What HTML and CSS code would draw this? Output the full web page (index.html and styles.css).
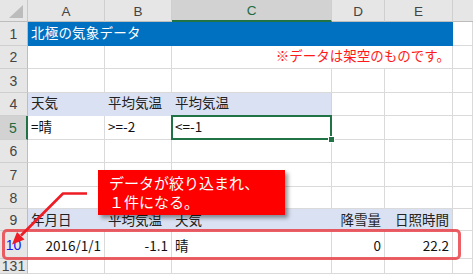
FILE: index.html
```html
<!DOCTYPE html>
<html lang="ja">
<head>
<meta charset="utf-8">
<title>北極の気象データ</title>
<link rel="stylesheet" href="styles.css">
</head>
<body>
<div class="sheet">
  <div class="corner"><svg class="tri" width="28" height="22" viewBox="0 0 28 22"><polygon points="9,18 23,18 23,5" fill="#bcbcbc"/></svg></div>
  <div class="ch">A</div>
  <div class="ch">B</div>
  <div class="ch sel">C</div>
  <div class="ch">D</div>
  <div class="ch">E</div>
  <div class="ch last"></div>

  <div class="rh">1</div>
  <div class="c title">北極の気象データ</div>
  <div class="c"></div>

  <div class="rh">2</div>
  <div class="c"></div>
  <div class="c"></div>
  <div class="c note">※データは架空のものです。</div>
  <div class="c"></div>

  <div class="rh">3</div>
  <div class="c"></div><div class="c"></div><div class="c"></div><div class="c"></div><div class="c"></div><div class="c"></div>

  <div class="rh">4</div>
  <div class="c band">天気</div>
  <div class="c band">平均気温</div>
  <div class="c band band-end">平均気温</div>
  <div class="c"></div><div class="c"></div><div class="c"></div>

  <div class="rh sel">5</div>
  <div class="c">=晴</div>
  <div class="c">&gt;=-2</div>
  <div class="c active">&lt;=-1</div>
  <div class="c"></div><div class="c"></div><div class="c"></div>

  <div class="rh">6</div>
  <div class="c"></div><div class="c"></div><div class="c"></div><div class="c"></div><div class="c"></div><div class="c"></div>

  <div class="rh">7</div>
  <div class="c"></div><div class="c"></div><div class="c"></div><div class="c"></div><div class="c"></div><div class="c"></div>

  <div class="rh">8</div>
  <div class="c"></div><div class="c"></div><div class="c"></div><div class="c"></div><div class="c"></div><div class="c"></div>

  <div class="rh">9</div>
  <div class="c band low">年月日</div>
  <div class="c band low">平均気温</div>
  <div class="c band low">天気</div>
  <div class="c band low num">降雪量</div>
  <div class="c band low num band-end">日照時間</div>
  <div class="c"></div>

  <div class="rh filtered">10</div>
  <div class="c num">2016/1/1</div>
  <div class="c num">-1.1</div>
  <div class="c">晴</div>
  <div class="c num">0</div>
  <div class="c num">22.2</div>
  <div class="c"></div>

  <div class="rh">131</div>
  <div class="c"></div><div class="c"></div><div class="c"></div><div class="c"></div><div class="c"></div><div class="c"></div>

  <div class="row-mark"></div>
  <svg class="arrow" width="473" height="274" viewBox="0 0 473 274">
    <polyline points="87,193.5 63,193.5 21,235.5" fill="none" stroke="#ee1c24" stroke-width="2.6" stroke-linejoin="round"/>
    <polygon points="12,244.5 24.5,239.5 17,232" fill="#ee1c24"/>
  </svg>
  <div class="callout">データが絞り込まれ、<br>１件になる。</div>
</div>
</body>
</html>
```

FILE: styles.css
```css
html, body {
  margin: 0;
  padding: 0;
  background: #ffffff;
}

body {
  width: 473px;
  height: 274px;
  overflow: hidden;
}

.sheet {
  position: relative;
  display: grid;
  grid-template-columns: 28px 77px 67px 160px 53px 68px 20px;
  grid-template-rows: 22px 24px 23px 24px 23px 24px 23px 24px 22px 22px 28px 15px;
  font-family: "Noto Sans CJK JP", sans-serif;
  font-size: 13.5px;
  color: #111111;
}

.corner {
  background: #e6e6e6;
  border-right: 1px solid #c8c8c8;
  border-bottom: 1px solid #bdbdbd;
  box-sizing: border-box;
  position: relative;
}

.tri {
  display: block;
}

.ch {
  background: #e6e6e6;
  border-right: 1px solid #cfcfcf;
  border-bottom: 1px solid #bdbdbd;
  box-sizing: border-box;
  display: flex;
  align-items: center;
  justify-content: center;
  font-family: "Liberation Sans", "Noto Sans", sans-serif;
  font-size: 13.5px;
  color: #444444;
  padding-top: 1px;
}

.ch.sel {
  background: #d2d2d2;
  border-bottom: 2px solid #217346;
  color: #1f6a42;
}

.ch.last {
  border-right: none;
}

.rh {
  background: #e6e6e6;
  border-right: 1px solid #bdbdbd;
  border-bottom: 1px solid #cfcfcf;
  box-sizing: border-box;
  display: flex;
  align-items: center;
  justify-content: center;
  font-family: "Liberation Sans", "Noto Sans", sans-serif;
  font-size: 14px;
  color: #444444;
  overflow: hidden;
}

.rh.sel {
  background: #d2d2d2;
  border-right: 2px solid #217346;
  color: #1f6a42;
}

.rh.filtered {
  color: #1515f0;
}

.c {
  border-right: 1px solid #dadada;
  border-bottom: 1px solid #dadada;
  box-sizing: border-box;
  display: flex;
  align-items: flex-end;
  padding: 0 3px 4px 3px;
  line-height: 18px;
  white-space: nowrap;
  min-width: 0;
}

.c.num {
  justify-content: flex-end;
}

.title {
  grid-column: 2 / 7;
  background: #0070c0;
  color: #ffffff;
  border-color: #0070c0;
  font-size: 13.5px;
  letter-spacing: 0.2px;
}

.note {
  grid-column: 4 / 7;
  justify-content: flex-end;
  color: #ff1a1a;
  padding-right: 2px;
}

.band {
  background: #d9e1f2;
  border-right-color: #d9e1f2;
  border-bottom-color: #d9e1f2;
  color: #222222;
}

.band.low {
  padding-bottom: 2px;
}

.band.band-end {
  border-right-color: #d4d4d4;
}

.active {
  position: relative;
}

.active::after {
  content: "";
  position: absolute;
  left: -1px;
  top: -1px;
  right: -1px;
  bottom: -1px;
  border: 2px solid #217346;
}

.active::before {
  content: "";
  position: absolute;
  right: -4px;
  bottom: -4px;
  width: 5px;
  height: 5px;
  background: #217346;
  border: 1px solid #ffffff;
  z-index: 1;
}

.row-mark {
  position: absolute;
  left: 2px;
  top: 229px;
  width: 459px;
  height: 31px;
  box-sizing: border-box;
  border: 3px solid rgba(232, 60, 66, 0.82);
  border-radius: 5px;
}

.arrow {
  position: absolute;
  left: 0;
  top: 0;
  pointer-events: none;
}

.callout {
  position: absolute;
  left: 98px;
  top: 170px;
  width: 187px;
  height: 45px;
  box-sizing: border-box;
  background: #ff0000;
  color: #ffffff;
  font-size: 15px;
  line-height: 19px;
  padding: 3px 0 0 11px;
  box-shadow: 3px 3px 4px rgba(0, 0, 0, 0.4);
}
```
